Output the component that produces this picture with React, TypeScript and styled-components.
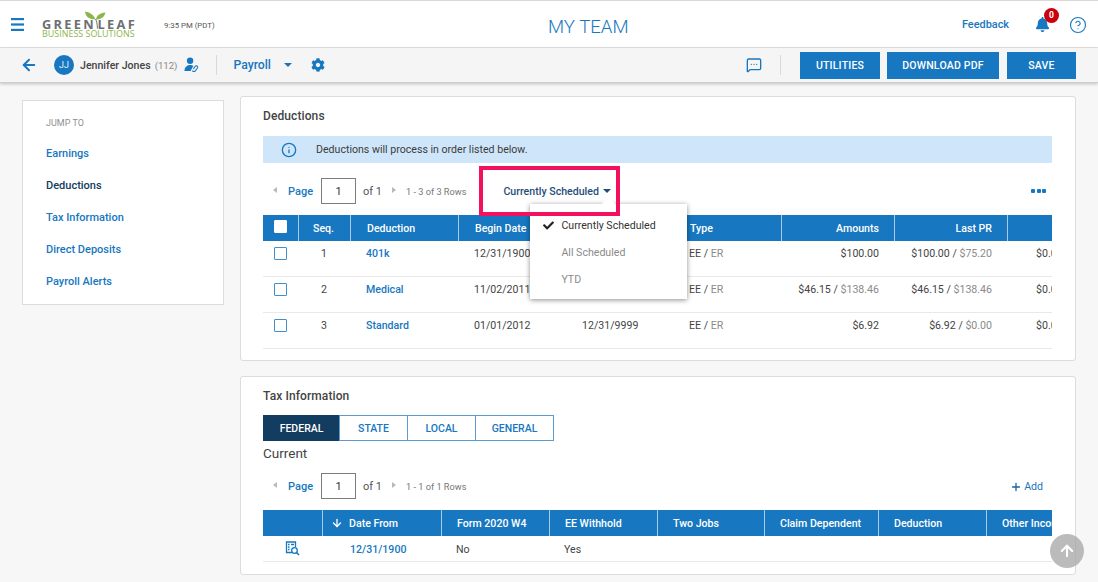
import React from "react";
import styled, { createGlobalStyle } from "styled-components";
import { ArrowDown, ArrowLeft, ArrowUp, CircleHelp, Info, MessageSquareMore, Plus } from "lucide-react";
import { FaBell, FaCheck, FaCog } from "react-icons/fa";

const BLUE = "#1777c0";
const NAVY = "#123c60";

const Global = createGlobalStyle`
  html, body { margin: 0; padding: 0; height: 582px; overflow: hidden; background: #f7f7f7; }
  body { font-family: Roboto, "Liberation Sans", sans-serif; color: #444; }
  * { box-sizing: border-box; }
`;

const Page = styled.div`
  width: 1098px;
  height: 582px;
  overflow: hidden;
  position: relative;
`;

const TopBar = styled.header`
  height: 48px;
  background: #fff;
  border-top: 1px solid #d8d8d8;
  border-bottom: 1px solid #e4e4e4;
  display: grid;
  grid-template-columns: 537px auto 1fr;
  align-items: center;
  padding: 0 11px 0 11px;
`;
const TopLeft = styled.div`
  display: flex;
  align-items: center;
`;
const Burger = styled.svg`
  width: 13px;
  height: 15px;
  margin-right: 18px;
`;
const Logo = styled.div`
  width: 93px;
  height: 30px;
  position: relative;
  margin-right: 29px;
`;
const LogoName = styled.div`
  position: absolute;
  left: 0;
  top: 9px;
  width: 95px;
  display: flex;
  justify-content: space-between;
  font: 700 12.8px/13px "Open Sans", sans-serif;
  letter-spacing: 2.3px;
  color: #6d6f71;
  white-space: nowrap;
`;
const LogoSub = styled.div`
  position: absolute;
  left: 0;
  top: 20px;
  font: 400 8.95px/10px "Open Sans", sans-serif;
  color: #8db64a;
  white-space: nowrap;
`;
const LeafMark = styled.svg`
  position: absolute;
  left: 43px;
  top: 1px;
  width: 21px;
  height: 24px;
`;
const Time = styled.span`
  font-size: 7.8px;
  color: #555;
  margin-top: 3px;
`;
const Title = styled.h1`
  margin: 5px 0 0;
  font-size: 18.6px;
  line-height: 24px;
  font-weight: 300;
  color: ${BLUE};
`;
const TopRight = styled.div`
  display: flex;
  align-items: center;
  justify-content: flex-end;
`;
const Feedback = styled.a`
  font-size: 10.9px;
  font-weight: 500;
  color: ${BLUE};
  margin-right: 26px;
  margin-top: 1px;
`;
const BellWrap = styled.div`
  position: relative;
  width: 16px;
  height: 16px;
  margin-right: 18px;
  color: ${BLUE};
  font-size: 15px;
  display: flex;
  margin-top: 1px;
`;
const Badge = styled.span`
  position: absolute;
  left: 9px;
  top: -9px;
  width: 15px;
  height: 15px;
  border-radius: 50%;
  background: #c9000e;
  color: #fff;
  font-size: 8.5px;
  font-weight: 700;
  display: flex;
  align-items: center;
  justify-content: center;
`;

const SubBar = styled.div`
  height: 35px;
  background: #f5f5f5;
  border-bottom: 1px solid #cfcfcf;
  box-shadow: 0 1px 3px rgba(0, 0, 0, 0.22);
  display: flex;
  align-items: center;
  padding: 0 22px;
  position: relative;
`;
const Avatar = styled.span`
  width: 20px;
  height: 20px;
  border-radius: 50%;
  background: ${BLUE};
  color: #e8f2fa;
  font-size: 9px;
  display: flex;
  align-items: center;
  justify-content: center;
  margin-left: 17px;
  margin-right: 6px;
`;
const Name = styled.span`
  font-size: 10.6px;
  font-weight: 500;
  color: #444;
  white-space: nowrap;
`;
const Muted = styled.span`
  font-size: 9.6px;
  color: #888;
  font-weight: 400;
  margin-left: 4px;
`;
const LinkUser = styled.svg`
  width: 15px;
  height: 15px;
  margin-left: 7px;
  margin-top: -2px;
`;
const VLine = styled.span<{ $ml: number; $mr: number }>`
  width: 1px;
  height: 20px;
  background: #d9d9d9;
  margin-left: ${(p) => p.$ml}px;
  margin-right: ${(p) => p.$mr}px;
`;
const Module = styled.span`
  font-size: 12.2px;
  font-weight: 500;
  color: ${BLUE};
  margin-top: -1px;
`;
const Caret = styled.span<{ $c?: string; $ml?: number }>`
  display: inline-block;
  width: 0;
  height: 0;
  border-left: 4.5px solid transparent;
  border-right: 4.5px solid transparent;
  border-top: 4.5px solid ${(p) => p.$c || BLUE};
  margin-left: ${(p) => p.$ml ?? 0}px;
`;
const Gear = styled(FaCog)`
  color: ${BLUE};
  font-size: 14px;
  margin-left: 19px;
`;
const Spacer = styled.div`
  flex: 1;
`;
const ActionBtn = styled.button<{ $w: number; $ml?: number }>`
  width: ${(p) => p.$w}px;
  height: 27px;
  border: 0;
  background: ${BLUE};
  color: #fff;
  font: 500 10.5px Roboto, sans-serif;
  letter-spacing: 0.2px;
  margin-left: ${(p) => p.$ml ?? 7}px;
  padding: 0;
`;
const Chat = styled(MessageSquareMore)`
  color: ${BLUE};
  width: 16px;
  height: 16px;
`;

const Body = styled.div`
  display: grid;
  grid-template-columns: 202px 836px;
  column-gap: 16px;
  padding: 13px 0 0 22px;
  align-items: start;
`;
const Side = styled.nav`
  margin-top: 4px;
  height: 205px;
  background: #fff;
  border: 1px solid #dcdcdc;
  padding: 16px 0 0 23px;
`;
const JumpLabel = styled.div`
  font-size: 9px;
  line-height: 12px;
  color: #8f8f8f;
  margin-bottom: 9px;
`;
const SideLink = styled.a<{ $active?: boolean }>`
  display: block;
  font-size: 11px;
  font-weight: 500;
  line-height: 32px;
  color: ${(p) => (p.$active ? NAVY : BLUE)};
`;

const Cards = styled.div`
  display: flex;
  flex-direction: column;
  gap: 15px;
`;
const Card = styled.section<{ $h: number }>`
  height: ${(p) => p.$h}px;
  background: #fff;
  border: 1px solid #dcdcdc;
  border-radius: 3px;
  padding: 0 23px 0 22px;
`;
const CardTitle = styled.h2`
  margin: 0;
  padding-top: 12px;
  font-size: 12px;
  line-height: 14px;
  font-weight: 500;
  color: #444;
  letter-spacing: 0.1px;
`;
const Banner = styled.div`
  margin-top: 13px;
  height: 27px;
  background: #cfe6fa;
  display: flex;
  align-items: center;
  padding-left: 18px;
  font-size: 10.6px;
  color: #3b3b3b;
  svg {
    color: ${BLUE};
    width: 16px;
    height: 16px;
    margin-right: 19px;
  }
`;
const PagerRow = styled.div<{ $mt: number }>`
  margin-top: ${(p) => p.$mt}px;
  height: 26px;
  display: flex;
  align-items: center;
  padding-left: 10px;
`;
const Tri = styled.span<{ $dir: "l" | "r" }>`
  width: 0;
  height: 0;
  border-top: 3.5px solid transparent;
  border-bottom: 3.5px solid transparent;
  ${(p) => (p.$dir === "l" ? "border-right: 4.5px solid #b9b9b9;" : "border-left: 4.5px solid #b9b9b9;")}
  margin-top: -2px;
`;
const PageWord = styled.span`
  font-size: 11px;
  font-weight: 500;
  color: ${BLUE};
  margin-left: 11px;
  width: 33px;
`;
const PageInput = styled.span`
  width: 35px;
  height: 26px;
  border: 1px solid #7c7c7c;
  display: flex;
  align-items: center;
  justify-content: center;
  font-size: 11px;
  color: #333;
`;
const OfText = styled.span`
  font-size: 11px;
  color: #555;
  margin-left: 7px;
  width: 29px;
`;
const Rows = styled.span`
  font-size: 9.2px;
  color: #777;
  margin-left: 10px;
  white-space: nowrap;
`;
const Filter = styled.div`
  position: relative;
  align-self: stretch;
  width: 150px;
  margin-left: 37px;
  display: flex;
  align-items: center;
  font-size: 10.6px;
  font-weight: 500;
  color: #1f4e79;
  white-space: nowrap;
`;
const Highlight = styled.div`
  position: absolute;
  left: -24px;
  top: -12px;
  width: 141px;
  height: 50px;
  border: 4px solid #f3115f;
  z-index: 6;
  pointer-events: none;
`;
const Menu = styled.div`
  position: absolute;
  left: 27px;
  top: 26px;
  width: 157px;
  height: 95px;
  background: #fff;
  box-shadow: 0 1px 5px rgba(0, 0, 0, 0.45);
  padding: 7.5px 0 0 31px;
  z-index: 5;
  &::before {
    content: "";
    position: absolute;
    left: 74px;
    top: -5px;
    width: 9px;
    height: 9px;
    background: #fff;
    transform: rotate(45deg);
  }
`;
const MenuItem = styled.div<{ $on?: boolean }>`
  position: relative;
  font-size: 10.6px;
  font-weight: 400;
  line-height: 27px;
  color: ${(p) => (p.$on ? "#333" : "#8a8a8a")};
  svg {
    position: absolute;
    left: -18px;
    top: 8px;
    width: 11px;
    height: 11px;
    color: #222;
  }
`;
const Dots = styled.span`
  margin-left: auto;
  margin-right: 6px;
  display: flex;
  gap: 1.5px;
  i {
    width: 4px;
    height: 4px;
    background: ${BLUE};
    border-radius: 1px;
  }
`;
const TableClip = styled.div`
  width: 789px;
  overflow: hidden;
  font-size: 10.6px;
  margin-top: 11px;
`;
const TableGrid = styled.div<{ $cols: string; $head?: boolean; $h: number }>`
  display: grid;
  grid-template-columns: ${(p) => p.$cols};
  height: ${(p) => p.$h}px;
  width: max-content;
  background: ${(p) => (p.$head ? BLUE : "#fff")};
  color: ${(p) => (p.$head ? "#fff" : "#444")};
  font-weight: ${(p) => (p.$head ? 500 : 400)};
  ${(p) => (p.$head ? "" : "border-bottom: 1px solid #e9e9e9;")}
  align-items: ${(p) => (p.$head ? "stretch" : "start")};
`;
const HeadCell = styled.div<{ $right?: boolean; $pl?: number; $center?: boolean }>`
  border-left: 1px solid #a9cbe6;
  display: flex;
  align-items: center;
  white-space: nowrap;
  justify-content: ${(p) => (p.$right ? "flex-end" : p.$center ? "center" : "flex-start")};
  padding: ${(p) => (p.$right ? "0 15px 0 0" : `0 0 0 ${p.$pl ?? 15}px`)};
  &:first-child {
    border-left: 0;
  }
  svg {
    width: 12px;
    height: 12px;
    stroke-width: 2.6;
    margin-right: 6px;
  }
`;
const Cell = styled.div<{ $right?: boolean; $pl?: number; $center?: boolean; $link?: boolean; $pt?: number }>`
  padding: ${(p) => (p.$right ? `${p.$pt ?? 6}px 15px 0 0` : `${p.$pt ?? 6}px 0 0 ${p.$pl ?? 15}px`)};
  text-align: ${(p) => (p.$right ? "right" : p.$center ? "center" : "left")};
  white-space: nowrap;
  line-height: 13px;
  color: ${(p) => (p.$link ? BLUE : "inherit")};
  font-weight: ${(p) => (p.$link ? 500 : "inherit")};
  span {
    color: #8a8a8a;
  }
`;
const CheckBox = styled.span<{ $white?: boolean }>`
  display: inline-block;
  width: 13px;
  height: 13px;
  background: ${(p) => (p.$white ? "#fff" : "transparent")};
  border: 1px solid ${(p) => (p.$white ? "#fff" : "#3f8fcc")};
  border-radius: 1px;
`;
const HeadCheck = styled(CheckBox)`
  margin-top: -4px;
`;
const Tabs = styled.div`
  display: flex;
  margin-top: 12px;
`;
const Tab = styled.div<{ $w: number; $on?: boolean }>`
  width: ${(p) => p.$w}px;
  height: 26px;
  margin-left: -1px;
  background: ${(p) => (p.$on ? NAVY : "#fff")};
  border: 1px solid ${(p) => (p.$on ? NAVY : "#5b9bd0")};
  color: ${(p) => (p.$on ? "#fff" : BLUE)};
  font-size: 10.5px;
  font-weight: 500;
  display: flex;
  align-items: center;
  justify-content: center;
  &:first-child {
    margin-left: 0;
  }
`;
const Current = styled.div`
  margin-top: 3px;
  font-size: 13.5px;
  line-height: 19px;
  color: #444;
`;
const AddLink = styled.span`
  margin-left: auto;
  display: flex;
  align-items: center;
  font-size: 10.6px;
  color: ${BLUE};
  margin-right: 9px;
  svg {
    width: 12px;
    height: 12px;
    stroke-width: 2.6;
    margin-right: 2px;
    margin-top: 1px;
    color: #1766a8;
  }
`;
const DocSearch = styled.svg`
  width: 15px;
  height: 15px;
  margin-top: -2px;
`;
const ScrollTop = styled.div`
  position: absolute;
  left: 1050px;
  top: 534px;
  width: 34px;
  height: 34px;
  border-radius: 50%;
  background: rgba(170, 170, 170, 0.8);
  color: #fff;
  display: flex;
  align-items: center;
  justify-content: center;
  z-index: 8;
  svg {
    width: 18px;
    height: 18px;
    stroke-width: 2.8;
  }
`;
const BackArrow = styled(ArrowLeft)`
  color: ${BLUE};
  width: 18px;
  height: 18px;
  stroke-width: 2.6;
  margin-left: -2px;
  margin-right: -1px;
`;
const Help = styled(CircleHelp)`
  color: ${BLUE};
  width: 18px;
  height: 18px;
  stroke-width: 1.5;
  margin-top: 1px;
`;

const dedCols = "35px 52px 108px 108px 115px 100px 113px 113px 113px";
const taxCols = "59px 119px 108px 108px 107px 114px 108px 108px";

const deductions = [
  { seq: 1, name: "401k", begin: "12/31/1900", end: "12/31/9999", amt: ["$100.00", ""], last: ["$100.00", "$75.20"] },
  { seq: 2, name: "Medical", begin: "11/02/2011", end: "12/31/9999", amt: ["$46.15", "$138.46"], last: ["$46.15", "$138.46"] },
  { seq: 3, name: "Standard", begin: "01/01/2012", end: "12/31/9999", amt: ["$6.92", ""], last: ["$6.92", "$0.00"] },
];

function Pager({ rows, mt, children }: { rows: string; mt: number; children?: React.ReactNode }) {
  return (
    <PagerRow $mt={mt}>
      <Tri $dir="l" />
      <PageWord>Page</PageWord>
      <PageInput>1</PageInput>
      <OfText>of 1</OfText>
      <Tri $dir="r" />
      <Rows>{rows}</Rows>
      {children}
    </PagerRow>
  );
}

export default function App() {
  return (
    <Page>
      <Global />
      <TopBar>
        <TopLeft>
          <Burger viewBox="0 0 13 15">
            <rect x="0" y="1" width="13" height="2.2" fill={BLUE} />
            <rect x="0" y="6.4" width="13" height="2.2" fill={BLUE} />
            <rect x="0" y="11.8" width="13" height="2.2" fill={BLUE} />
          </Burger>
          <Logo>
            <LogoName>
              <span>GREEN</span>
              <span>LEAF</span>
            </LogoName>
            <LogoSub>BUSINESS SOLUTIONS</LogoSub>
            <LeafMark viewBox="0 0 21 24">
              <path d="M10.5 9.500C9 5.500 6 2.500 0 1.500c.5 5 4 8 10.500 8z" fill="#8db64a" />
              <path d="M11 9.500c.5-4 3.500-6.500 9.500-7C19.500 7 16 9.500 11 9.500z" fill="#8db64a" />
              <path d="M10.600 9c1 2 1.800 5 1.800 9.500" fill="none" stroke="#6d6f71" strokeWidth="1" />
            </LeafMark>
          </Logo>
          <Time>9:35 PM (PDT)</Time>
        </TopLeft>
        <Title>MY TEAM</Title>
        <TopRight>
          <Feedback>Feedback</Feedback>
          <BellWrap>
            <FaBell />
            <Badge>0</Badge>
          </BellWrap>
          <Help />
        </TopRight>
      </TopBar>
      <SubBar>
        <BackArrow />
        <Avatar>JJ</Avatar>
        <Name>
          Jennifer Jones<Muted>(112)</Muted>
        </Name>
        <LinkUser viewBox="0 0 15 16">
          <circle cx="6" cy="4" r="3.400" fill={BLUE} />
          <path d="M0 15c0-4 2.500-6.500 6-6.500 1.500 0 2.500.4 3.400 1L6.500 15z" fill={BLUE} />
          <path d="M8 14.500l1.500 1c1 .4 1.700-.2 2.300-1l2-2.800c.5-.8.300-1.600-.4-2.100-.7-.4-1.500-.3-2 .4l-2 2.800" fill="none" stroke={BLUE} strokeWidth="1.100" />
        </LinkUser>
        <VLine $ml={17} $mr={16} />
        <Module>Payroll</Module>
        <Caret $ml={13} />
        <Gear />
        <Spacer />
        <Chat />
        <VLine $ml={18} $mr={12} />
        <ActionBtn $w={80}>UTILITIES</ActionBtn>
        <ActionBtn $w={112}>DOWNLOAD PDF</ActionBtn>
        <ActionBtn $w={69} $ml={8}>SAVE</ActionBtn>
      </SubBar>
      <Body>
        <Side>
          <JumpLabel>JUMP TO</JumpLabel>
          <SideLink>Earnings</SideLink>
          <SideLink $active>Deductions</SideLink>
          <SideLink>Tax Information</SideLink>
          <SideLink>Direct Deposits</SideLink>
          <SideLink>Payroll Alerts</SideLink>
        </Side>
        <Cards>
          <Card $h={265}>
            <CardTitle>Deductions</CardTitle>
            <Banner>
              <Info />
              Deductions will process in order listed below.
            </Banner>
            <Pager rows="1 - 3 of 3 Rows" mt={15}>
              <Filter>
                Currently Scheduled
                <Caret $c="#1f4e79" $ml={4} />
                <Highlight />
                <Menu>
                  <MenuItem $on>
                    <FaCheck />
                    Currently Scheduled
                  </MenuItem>
                  <MenuItem>All Scheduled</MenuItem>
                  <MenuItem>YTD</MenuItem>
                </Menu>
              </Filter>
              <Dots>
                <i />
                <i />
                <i />
              </Dots>
            </Pager>
            <TableClip>
              <TableGrid $cols={dedCols} $head $h={26}>
                <HeadCell $center $pl={0}>
                  <HeadCheck $white />
                </HeadCell>
                <HeadCell $pl={14}>Seq.</HeadCell>
                <HeadCell $pl={16}>Deduction</HeadCell>
                <HeadCell $pl={16}>Begin Date</HeadCell>
                <HeadCell $pl={16}>End Date</HeadCell>
                <HeadCell $pl={8}>Type</HeadCell>
                <HeadCell $right>Amounts</HeadCell>
                <HeadCell $right>Last PR</HeadCell>
                <HeadCell $right />
              </TableGrid>
              {deductions.map((d) => (
                <TableGrid $cols={dedCols} $h={36} key={d.seq}>
                  <Cell $center $pl={0}>
                    <CheckBox />
                  </Cell>
                  <Cell $pl={23}>{d.seq}</Cell>
                  <Cell $link $pl={16}>{d.name}</Cell>
                  <Cell $pl={16}>{d.begin}</Cell>
                  <Cell $pl={16}>{d.end}</Cell>
                  <Cell $pl={8}>
                    EE / <span>ER</span>
                  </Cell>
                  <Cell $right>
                    {d.amt[0]}
                    {d.amt[1] ? " / " : ""}
                    {d.amt[1] ? <span>{d.amt[1]}</span> : null}
                  </Cell>
                  <Cell $right>
                    {d.last[0]} / <span>{d.last[1]}</span>
                  </Cell>
                  <Cell $pl={29}>$0.00</Cell>
                </TableGrid>
              ))}
            </TableClip>
          </Card>
          <Card $h={199}>
            <CardTitle>Tax Information</CardTitle>
            <Tabs>
              <Tab $w={77} $on>
                FEDERAL
              </Tab>
              <Tab $w={69}>STATE</Tab>
              <Tab $w={69}>LOCAL</Tab>
              <Tab $w={79}>GENERAL</Tab>
            </Tabs>
            <Current>Current</Current>
            <Pager rows="1 - 1 of 1 Rows" mt={10}>
              <AddLink>
                <Plus />
                Add
              </AddLink>
            </Pager>
            <TableClip>
              <TableGrid $cols={taxCols} $head $h={26}>
                <HeadCell />
                <HeadCell $pl={8}>
                  <ArrowDown />
                  Date From
                </HeadCell>
                <HeadCell>Form 2020 W4</HeadCell>
                <HeadCell>EE Withhold</HeadCell>
                <HeadCell>Two Jobs</HeadCell>
                <HeadCell>Claim Dependent</HeadCell>
                <HeadCell>Deduction</HeadCell>
                <HeadCell>Other Income</HeadCell>
              </TableGrid>
              <TableGrid $cols={taxCols} $h={26}>
                <Cell $center $pl={0} $pt={7}>
                  <DocSearch viewBox="0 0 15 15" fill="none" stroke={BLUE}>
                    <path d="M7 11.500H1.500V1h9v5" strokeWidth="1.300" />
                    <path d="M3 3.500h1.500M6 3.500h3M3 6h1.500M3 8.500h1.500" strokeWidth="1.300" />
                    <circle cx="9.500" cy="9.500" r="2.800" strokeWidth="1.300" />
                    <path d="M11.500 11.500l2.500 2.500" strokeWidth="1.600" />
                  </DocSearch>
                </Cell>
                <Cell $link $pl={28} $pt={7}>
                  12/31/1900
                </Cell>
                <Cell $pt={7}>No</Cell>
                <Cell $pt={7}>Yes</Cell>
                <Cell />
                <Cell />
                <Cell />
                <Cell />
              </TableGrid>
            </TableClip>
          </Card>
        </Cards>
      </Body>
      <ScrollTop>
        <ArrowUp />
      </ScrollTop>
    </Page>
  );
}
